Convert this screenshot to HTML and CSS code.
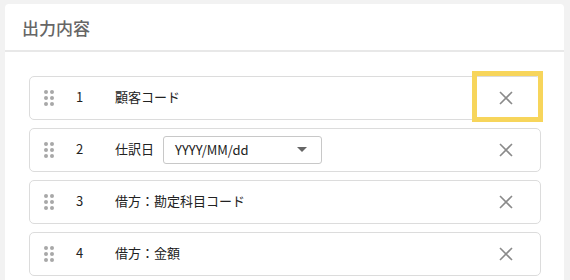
FILE: index.html
```html
<!DOCTYPE html>
<html lang="ja">
<head>
<meta charset="utf-8">
<link rel="stylesheet" href="styles.css">
</head>
<body>
<div class="card">
  <div class="card-header">出力内容</div>
  <div class="card-body">
    <div class="row">
      <span class="handle"><i></i><i></i><i></i><i></i><i></i><i></i></span>
      <span class="num">1</span>
      <span class="label">顧客コード</span>
      <button class="remove" aria-label="削除"><svg width="14" height="14" viewBox="0 0 14 14"><path d="M1 1L13 13M13 1L1 13" stroke="#8a8a8a" stroke-width="1.6" fill="none"/></svg></button>
      <span class="focus-ring"></span>
    </div>
    <div class="row">
      <span class="handle"><i></i><i></i><i></i><i></i><i></i><i></i></span>
      <span class="num">2</span>
      <span class="label">仕訳日</span>
      <span class="select"><span class="select-text">YYYY/MM/dd</span><svg width="10" height="6" viewBox="0 0 10 6"><path d="M0 0H10L5 5Z" fill="#666"/></svg></span>
      <button class="remove" aria-label="削除"><svg width="14" height="14" viewBox="0 0 14 14"><path d="M1 1L13 13M13 1L1 13" stroke="#8a8a8a" stroke-width="1.6" fill="none"/></svg></button>
    </div>
    <div class="row">
      <span class="handle"><i></i><i></i><i></i><i></i><i></i><i></i></span>
      <span class="num">3</span>
      <span class="label">借方：勘定科目コード</span>
      <button class="remove" aria-label="削除"><svg width="14" height="14" viewBox="0 0 14 14"><path d="M1 1L13 13M13 1L1 13" stroke="#8a8a8a" stroke-width="1.6" fill="none"/></svg></button>
    </div>
    <div class="row">
      <span class="handle"><i></i><i></i><i></i><i></i><i></i><i></i></span>
      <span class="num">4</span>
      <span class="label">借方：金額</span>
      <button class="remove" aria-label="削除"><svg width="14" height="14" viewBox="0 0 14 14"><path d="M1 1L13 13M13 1L1 13" stroke="#8a8a8a" stroke-width="1.6" fill="none"/></svg></button>
    </div>
  </div>
</div>
</body>
</html>
```

FILE: styles.css
```css
html, body {
  margin: 0;
  padding: 0;
}
body {
  background: #f2f2f2;
  padding: 4px 6px 0 5px;
  font-family: "Noto Sans CJK JP", "Noto Sans", sans-serif;
  color: #222;
  height: 280px;
  box-sizing: border-box;
  overflow: hidden;
}
.card {
  background: #fff;
  border-radius: 4px 4px 0 0;
  height: 276px;
}
.card-header {
  height: 46px;
  border-bottom: 2px solid #e8e8e8;
  box-sizing: content-box;
  padding-left: 17px;
  display: flex;
  align-items: center;
  font-size: 17px;
  line-height: 1;
  color: #666;
  font-weight: 500;
}
.card-body {
  padding: 24px 23px 0 24px;
  display: flex;
  flex-direction: column;
  gap: 8px;
}
.row {
  position: relative;
  height: 44px;
  box-sizing: border-box;
  border: 1px solid #dcdcdc;
  border-radius: 5px;
  display: flex;
  align-items: center;
  padding: 0 27px 0 14px;
  font-size: 13px;
  line-height: 1;
}
.handle {
  display: grid;
  grid-template-columns: 4px 4px;
  gap: 2px;
  width: 10px;
  margin-right: 22px;
}
.handle i {
  width: 4px;
  height: 4px;
  border-radius: 50%;
  background: #a8a8a8;
}
.num {
  width: 39px;
  font-size: 13px;
  margin-bottom: 4px;
}
.label {
  margin-right: 9px;
  margin-bottom: 4px;
}
.select {
  width: 159px;
  height: 28px;
  box-sizing: border-box;
  border: 1px solid #c8c8c8;
  border-radius: 3px;
  display: flex;
  align-items: center;
  justify-content: space-between;
  padding: 0 14px 0 11px;
  font-size: 13px;
  color: #222;
}
.select-text {
  margin-bottom: 2px;
}
.remove {
  margin-left: auto;
  border: 0;
  background: none;
  padding: 0;
  width: 14px;
  height: 14px;
  display: flex;
  margin-bottom: 1px;
}
.focus-ring {
  position: absolute;
  left: 442px;
  top: -6px;
  width: 71px;
  height: 51px;
  box-sizing: border-box;
  border: 5px solid #f7d55b;
}
```
